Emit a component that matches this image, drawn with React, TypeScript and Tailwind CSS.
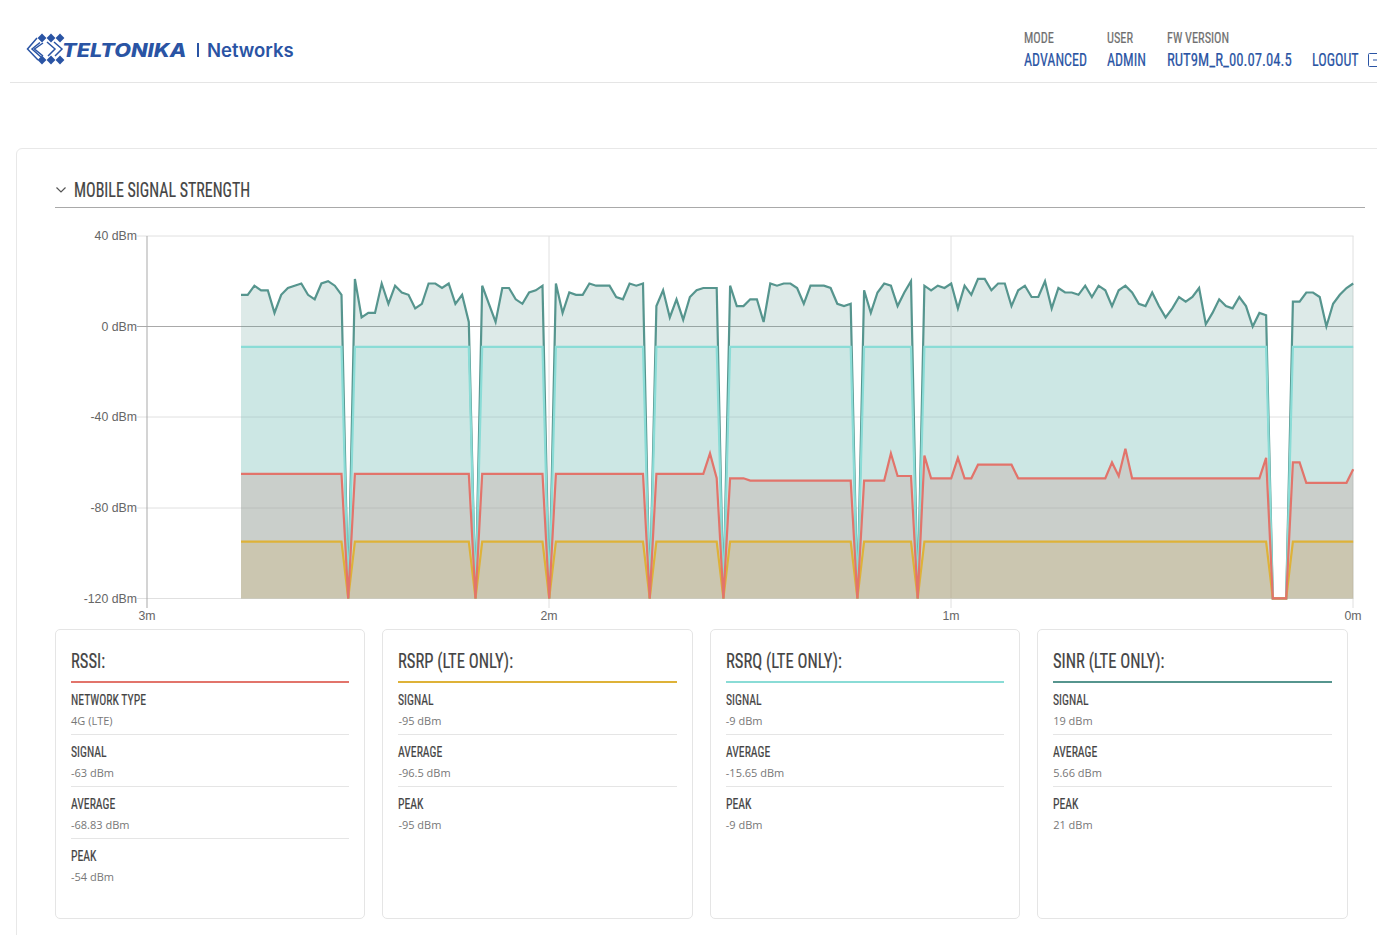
const NARROW = "font-['Roboto_Condensed','Liberation_Sans',sans-serif] [-webkit-text-stroke:0.2px_currentColor]";
const SQUEEZE = "inline-block origin-left whitespace-nowrap";

// dBm samples, one every 6.7px starting at x=241; D marks a dropped sample (all series fall to the floor)
const D = -120;
const sinr = [
  14, 14, 18, 16, 16, 6, 14, 17, 18, 19, 14, 12, 19, 20, 18, 14, D,
  21, 4, 6, 6, 19, 10, 18, 15, 14, 8, 10, 19, 19, 17, 19, 10, 14, 2, D,
  18, 10, 2, 17, 17, 12, 10, 15, 16, 18, D,
  19, 6, 15, 14, 14, 19, 18, 18, 18, 13, 12, 19, 18, 19, D,
  9, 16, 4, 12, 3, 13, 16, 17, 17, 17, D,
  18, 9, 9, 12, 12, 2, 19, 18, 19, 19, 17, 10, 18, 18, 18, 17, 10, 9, 10, D,
  16, 6, 15, 19, 18, 9, 15, 20, D,
  18, 16, 18, 17, 19, 8, 18, 14, 21, 21, 16, 19, 19, 9, 16, 18,
  13, 13, 20, 8, 17, 15, 15, 14, 18, 13, 18, 16, 9, 16, 18, 15, 10, 9, 15, 9, 4, 8, 13, 11, 13, 17, 1, 6, 12, 9, 8, 13, 9, 0, 6, 5,
  D, D, D,
  11, 11, 15, 15, 13, 0, 10, 14, 17, 19,
];

const isDrop = (i: number) => sinr[i] === D;
const flat = (v: number) => sinr.map((_, i) => (isDrop(i) ? D : v));
const rsrq = flat(-9);
const rsrp = flat(-95);

const rssiOverrides: Record<number, number> = { 70: -56, 71: -67, 73: -67, 74: -67, 75: -67, 97: -56, 98: -66, 99: -66, 100: -66, 102: -57, 107: -58, 130: -60, 131: -66, 132: -54, 153: -58, 157: -60, 158: -60, 166: -63 };
const rssi = sinr.map((_, i) => {
  if (isDrop(i)) return D;
  if (rssiOverrides[i] !== undefined) return rssiOverrides[i];
  if (i < 72) return -65;
  if (i < 101) return -68;
  if (i >= 110 && i <= 115) return -61;
  if (i >= 159) return -69;
  return -67;
});

const toX = (i: number) => 241 + i * 6.7;
const toY = (v: number) => 326.5 + (-v * 362.5) / 160;

const linePoints = (data: number[]) => data.map((v, i) => `${toX(i).toFixed(1)},${toY(v).toFixed(1)}`).join(" ");
const areaPath = (data: number[]) => `M${toX(0)},598.5 L${linePoints(data)} L${toX(data.length - 1)},598.5 Z`;

const series = [
  { data: sinr, color: "#56958e", fill: "#56958e" },
  { data: rsrq, color: "#8adcd6", fill: "#8adcd6" },
  { data: rsrp, color: "#deb238", fill: "#d8b03a" },
  { data: rssi, color: "#e2746b", fill: "#c4746b" },
];

function Chart() {
  const labels = [
    { y: 236, text: "40 dBm" },
    { y: 326.5, text: "0 dBm" },
    { y: 417, text: "-40 dBm" },
    { y: 508, text: "-80 dBm" },
    { y: 598.5, text: "-120 dBm" },
  ];
  const times = [
    { x: 147, text: "3m" },
    { x: 549, text: "2m" },
    { x: 951, text: "1m" },
    { x: 1353, text: "0m" },
  ];
  return (
    <svg viewBox="55 225 1310 404" className="block h-[404px] w-[1310px]">
      {labels.map((l) => (
        <g key={l.text}>
          <line x1="137" x2="1353.5" y1={l.y} y2={l.y} stroke={l.text === "0 dBm" ? "#a9a9a9" : "#e0e0e0"} />
          <text x="137" y={l.y + 4} textAnchor="end" fontSize="12.3" fill="#666" fontFamily="Liberation Sans, sans-serif">{l.text}</text>
        </g>
      ))}
      {times.map((t) => (
        <g key={t.text}>
          <line x1={t.x} x2={t.x} y1="236" y2="608" stroke={t.text === "3m" ? "#a9a9a9" : "#e0e0e0"} />
          <text x={t.x} y="620" textAnchor="middle" fontSize="12.3" fill="#666" fontFamily="Liberation Sans, sans-serif">{t.text}</text>
        </g>
      ))}
      {series.map((s) => (
        <path key={s.color} d={areaPath(s.data)} fill={s.fill} fillOpacity="0.2" />
      ))}
      {series.map((s) => (
        <polyline key={s.color} points={linePoints(s.data)} fill="none" stroke={s.color} strokeWidth="2.2" strokeLinejoin="miter" />
      ))}
    </svg>
  );
}

function Logo() {
  const diamonds = [
    [42, 38], [51, 38], [60, 38],
    [42, 60], [51, 60], [60, 60],
  ];
  return (
    <div className="flex items-center">
      <svg viewBox="26 32 40 36" className="h-[36px] w-[40px]">
        <g fill="#2a54a4">
          {diamonds.map(([x, y]) => (
            <path key={`${x}-${y}`} d={`M${x} ${y - 4.4}l4.4 4.4-4.4 4.4-4.4-4.4z`} />
          ))}
        </g>
        <path d="M37 38L27.5 49 38 60M43 43L34.5 49 43 56" fill="none" stroke="#2a54a4" strokeWidth="1.5" />
        <path d="M40 42.5L32 49 41 57M47 42L55 49 48 56M54 42L62 49 55 56" fill="none" stroke="#2a54a4" strokeWidth="1.5" />
      </svg>
      <span className="-ml-[4px] w-[125px] font-['Inter',sans-serif] text-[18.5px] leading-none font-extrabold text-[#2a54a4] italic">
        <span className={`${SQUEEZE} scale-x-[1.17]`}>TELTONIKA</span>
      </span>
      <span className="mr-[8px] ml-[10px] h-[14px] w-[2px] bg-[#2a54a4]" />
      <span className="font-['Inter',sans-serif] text-[18.5px] leading-none font-semibold text-[#2a54a4]">Networks</span>
    </div>
  );
}

function HeaderItem({ label, value, className, valueClass = "scale-x-[0.78]" }: { label: string; value: string; className: string; valueClass?: string }) {
  return (
    <div className={`flex shrink-0 flex-col ${NARROW} ${className}`}>
      <span className={`${SQUEEZE} scale-x-[0.82] text-[15px] leading-[18px] text-[#6f6f6f]`}>{label}</span>
      <span className={`${SQUEEZE} mt-[2px] text-[18px] leading-[22px] text-[#2a54a4] ${valueClass}`}>{value}</span>
    </div>
  );
}

type Row = { label: string; value: string };

function StatCard({ title, color, rows }: { title: string; color: string; rows: Row[] }) {
  return (
    <div className="h-[290px] rounded-[5px] border border-[#e5e5e5] px-[15px] pt-[18px]">
      <div className={`h-[33px] text-[21px] leading-[26px] text-[#444] ${NARROW}`}>
        <span className={`${SQUEEZE} scale-x-[0.79]`}>{title}</span>
      </div>
      <div className="h-[2px]" style={{ backgroundColor: color }} />
      {rows.map((r) => (
        <div key={r.label} className="h-[52px] border-b border-[#e5e5e5] pt-[7px] last:border-b-0">
          <div className={`text-[15.5px] leading-[20px] text-[#444] ${NARROW}`}>
            <span className={`${SQUEEZE} scale-x-[0.755]`}>{r.label}</span>
          </div>
          <div className="mt-[3px] font-['Open_Sans',sans-serif] text-[11px] leading-[16px] text-[#777]">{r.value}</div>
        </div>
      ))}
    </div>
  );
}

const cards = [
  {
    title: "RSSI:",
    color: "#e2746b",
    rows: [
      { label: "NETWORK TYPE", value: "4G (LTE)" },
      { label: "SIGNAL", value: "-63 dBm" },
      { label: "AVERAGE", value: "-68.83 dBm" },
      { label: "PEAK", value: "-54 dBm" },
    ],
  },
  {
    title: "RSRP (LTE ONLY):",
    color: "#deb238",
    rows: [
      { label: "SIGNAL", value: "-95 dBm" },
      { label: "AVERAGE", value: "-96.5 dBm" },
      { label: "PEAK", value: "-95 dBm" },
    ],
  },
  {
    title: "RSRQ (LTE ONLY):",
    color: "#8adcd6",
    rows: [
      { label: "SIGNAL", value: "-9 dBm" },
      { label: "AVERAGE", value: "-15.65 dBm" },
      { label: "PEAK", value: "-9 dBm" },
    ],
  },
  {
    title: "SINR (LTE ONLY):",
    color: "#56958e",
    rows: [
      { label: "SIGNAL", value: "19 dBm" },
      { label: "AVERAGE", value: "5.66 dBm" },
      { label: "PEAK", value: "21 dBm" },
    ],
  },
];

export default function App() {
  return (
    <div className="h-[935px] w-[1377px] overflow-hidden bg-white">
      {/* Header */}
      <header className="ml-[10px] flex h-[83px] w-[1367px] items-center justify-between border-b border-[#e5e5e5] pt-[18px] pl-[16px]">
        <Logo />
        <div className="mt-[11px] flex w-[353px] shrink-0 self-start overflow-hidden">
          <HeaderItem label="MODE" value="ADVANCED" className="w-[83px]" />
          <HeaderItem label="USER" value="ADMIN" className="w-[60px]" />
          <HeaderItem label="FW VERSION" value="RUT9M_R_00.07.04.5" className="w-[145px]" valueClass="scale-x-[0.82]" />
          <div className={`mt-[20px] flex shrink-0 items-center text-[18px] leading-[22px] text-[#2a54a4] ${NARROW}`}>
            <span className="w-[56px]">
              <span className={`${SQUEEZE} scale-x-[0.78]`}>LOGOUT</span>
            </span>
            <svg viewBox="0 0 14 14" className="h-[14px] w-[14px] shrink-0" fill="none" stroke="#2a54a4" strokeWidth="1">
              <path d="M12 .5H1.5a1 1 0 0 0-1 1v11a1 1 0 0 0 1 1H12M5 7h9" />
            </svg>
          </div>
        </div>
      </header>

      {/* Main panel runs off the right edge */}
      <main className="mt-[65px] ml-[16px] w-[1400px] rounded-[6px] border border-[#e8e8e8] pt-[27px] pb-[40px] pl-[38px]">
        <div className="flex h-[32px] w-[1310px] items-center gap-[7px] border-b border-[#a9a9a9] pb-[3px]">
          <svg viewBox="0 0 12 8" className="h-[8px] w-[12px]" fill="none" stroke="#555" strokeWidth="1.2">
            <path d="M1.5 1.5L6 6l4.5-4.5" />
          </svg>
          <h2 className={`text-[21px] leading-[26px] text-[#444] ${NARROW}`}>
            <span className={`${SQUEEZE} scale-x-[0.76]`}>MOBILE SIGNAL STRENGTH</span>
          </h2>
        </div>
        <div className="mt-[17px]">
          <Chart />
        </div>
        <div className="grid w-[1292.6px] grid-cols-4 gap-[17px]">
          {cards.map((c) => (
            <StatCard key={c.title} {...c} />
          ))}
        </div>
      </main>
    </div>
  );
}
